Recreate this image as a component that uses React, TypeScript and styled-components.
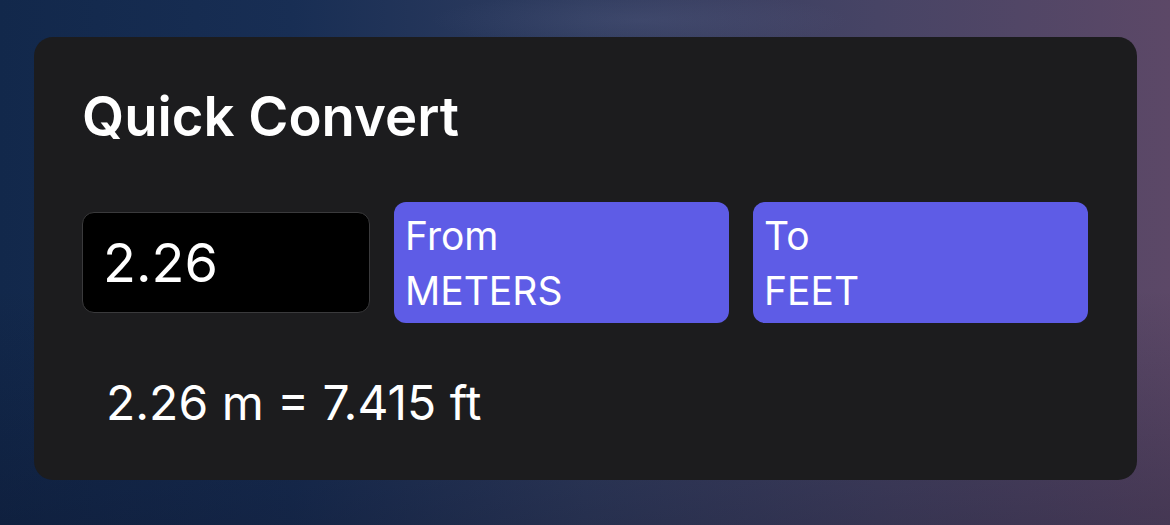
import React, { useState } from "react";
import styled, { createGlobalStyle } from "styled-components";

const GlobalStyle = createGlobalStyle`
  html, body {
    margin: 0;
    padding: 0;
    width: 1170px;
    height: 525px;
    overflow: hidden;
  }
  body {
    font-family: Inter, "Noto Sans", "Liberation Sans", sans-serif;
    background:
      radial-gradient(ellipse 300px 40px at 640px 20px, rgba(110, 120, 160, 0.16), transparent 70%),
      linear-gradient(180deg, rgba(0, 0, 0, 0) 55%, rgba(8, 12, 32, 0.28) 100%),
      linear-gradient(90deg, #12284b 0%, #182e54 25%, #313d60 50%, #474465 75%, #5c4867 100%);
  }
`;

const Page = styled.div`
  padding: 37px 33px 0 34px;
`;

const Card = styled.section`
  background: #1c1c1e;
  border-radius: 19px;
  padding: 48px;
  display: flex;
  flex-direction: column;
`;

const Title = styled.h1`
  margin: 0;
  color: #ffffff;
  font-size: 54.5px;
  line-height: 62px;
  font-weight: 600;
  letter-spacing: 0;
`;

const Row = styled.div`
  margin-top: 55px;
  display: flex;
  align-items: center;
  gap: 24px;
`;

const ValueInput = styled.input`
  box-sizing: border-box;
  width: 288px;
  height: 101px;
  background: #000000;
  border: 1px solid #3a3a3c;
  border-radius: 12px;
  padding: 0 20px;
  color: #ffffff;
  font-family: inherit;
  font-size: 54px;
  font-weight: 400;
  outline: none;
`;

const UnitButton = styled.button`
  box-sizing: border-box;
  flex: 0 0 335px;
  height: 121px;
  background: #5e5ce6;
  border: none;
  border-radius: 12px;
  padding: 6px 11px 4px;
  display: flex;
  flex-direction: column;
  align-items: flex-start;
  justify-content: flex-start;
  color: #ffffff;
  font-family: inherit;
  font-size: 39px;
  line-height: 55px;
  text-align: left;
  cursor: pointer;
`;

const Result = styled.div`
  margin-top: 51px;
  padding-left: 24px;
  color: #ffffff;
  font-size: 48px;
  line-height: 58px;
  font-weight: 400;
`;

export default function App() {
  const [value, setValue] = useState("2.26");
  const num = parseFloat(value) || 0;
  const ft = (num * 3.28084).toFixed(3);
  return (
    <>
      <GlobalStyle />
      <Page>
        <Card>
          <Title>Quick Convert</Title>
          <Row>
            <ValueInput value={value} onChange={(e) => setValue(e.target.value)} />
            <UnitButton>
              <span>From</span>
              <span>METERS</span>
            </UnitButton>
            <UnitButton>
              <span>To</span>
              <span>FEET</span>
            </UnitButton>
          </Row>
          <Result>
            {value} m = {ft} ft
          </Result>
        </Card>
      </Page>
    </>
  );
}
